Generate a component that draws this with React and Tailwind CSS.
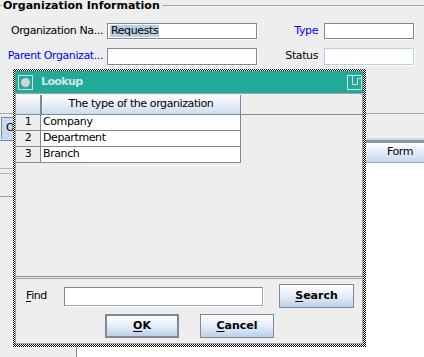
/**
 * Lookup dialog over an organization form (Swing Metal look)
 */
function Field({ className = '', children }) {
  return (
    <div
      className={`h-[16px] bg-white border flex items-center shadow-[1px_1px_0_#ffffff] ${className}`}
    >
      {children}
    </div>
  );
}

function Button({ className = '', children }) {
  return (
    <div
      className={`h-[24px] flex items-center justify-center font-bold bg-gradient-to-b from-white via-[#e4edf7] to-[#bcd0e8] tracking-normal ${className}`}
    >
      {children}
    </div>
  );
}

function TitleIcon() {
  return (
    <svg width="15" height="15" viewBox="0 0 15 15">
      <rect x="0.5" y="0.5" width="14" height="14" fill="none" stroke="#cfdedb" />
      <circle cx="7.5" cy="7.5" r="4.5" fill="#d4d4d4" />
    </svg>
  );
}

function MaximizeIcon() {
  return (
    <svg width="15" height="15" viewBox="0 0 15 15">
      <rect x="0.5" y="0.5" width="14" height="14" fill="none" stroke="#cfdedb" />
      <path d="M5.5 0.5V9.5H10.5V3.5H14.5" fill="none" stroke="#cfdedb" />
    </svg>
  );
}

const rows = ['Company', 'Department', 'Branch'];

export default function App() {
  return (
    <div className="relative w-[424px] h-[357px] overflow-hidden bg-[#eeeeee] text-[11px] tracking-[-0.4px] text-black font-['DejaVu_Sans',sans-serif]">
      {/* form behind the dialog */}
      <div className="flex flex-col h-full">
        <div className="flex items-center h-[12px] -mt-[1px]">
          <div className="w-[2px] h-px bg-[#a8a8a8]" />
          <span className="ml-[1px] font-bold leading-none tracking-normal">Organization Information</span>
          <div className="flex-1 ml-[2px] h-px bg-[#a8a8a8]" />
        </div>

        <div className="flex items-center mt-[12px] h-[16px]">
          <div className="w-[103px] text-right">Organization Na...</div>
          <Field className="ml-[4px] w-[150px] border-[#7a8a99] pl-[2px]">
            <span className="bg-[#b8cfe5] px-px leading-[12px]">Requests</span>
          </Field>
          <div className="w-[61px] text-right text-[#0000ff]">Type</div>
          <Field className="ml-[6px] w-[90px] border-[#7a8a99]" />
        </div>

        <div className="flex items-center mt-[9px] h-[17px]">
          <div className="w-[103px] text-right text-[#0000ff]">Parent Organizat...</div>
          <Field className="ml-[4px] w-[150px] h-[17px] border-[#7a8a99]" />
          <div className="w-[61px] text-right">Status</div>
          <Field className="ml-[6px] w-[90px] h-[17px] border-[#b8cfe5]" />
        </div>

        <div className="mt-[48px] h-px bg-[#a8a8a8]" />
        <div className="h-[24px] flex items-end">
          <div className="ml-[1px] h-[21px] w-[12px] bg-[#c8daf0] border-t border-l border-[#7a8a99] pl-[4px] flex items-center">
            O
          </div>
          <div className="h-[21px] flex-1 bg-[#eeeeee]" />
        </div>
        <div className="h-[2px] bg-[#c8daf0]" />

        <div className="flex flex-1">
          <div className="w-[77px] border-t border-r border-[#7a8a99] flex flex-col">
            <div className="mt-[27px] h-px bg-[#a9b5c2]" />
            <div className="mt-[4px] h-px bg-[#a9b5c2]" />
            <div className="mt-[22px] h-px bg-[#a0a0a0]" />
          </div>
          <div className="flex-1 bg-white flex flex-col border-t-[3px] border-[#8797ab]">
            <div className="h-[20px] flex bg-gradient-to-b from-white to-[#c6d8ee] border-b border-[#9aaabb]">
              <div className="flex-1" />
              <div className="w-[58px] pl-[10px] flex items-center justify-center">Form</div>
            </div>
          </div>
        </div>
      </div>

      {/* Lookup dialog */}
      <div className="absolute left-[13px] top-[69px] w-[353px] h-[278px] pt-[2px] pl-[2px] pr-[3px] pb-[3px] bg-[repeating-conic-gradient(#000_0%_25%,#fff_0%_50%)] bg-[length:2px_2px]">
        <div className="h-full flex flex-col bg-[#eeeeee]">
          <div className="h-[22px] bg-[#21a99a] flex items-center pl-[3px] pr-px">
            <TitleIcon />
            <span className="ml-[8px] font-bold text-[#d3e6e2] tracking-[-0.6px]">Lookup</span>
            <div className="flex-1" />
            <MaximizeIcon />
          </div>

          <div className="flex-1 flex flex-col border-x border-[#a3a3a3]">
            <div className="h-px bg-[#a3a3a3]" />
            <div className="h-px" />
            {/* table */}
            <div className="h-[182px] border-b border-[#8a8a8a]">
              <div className="flex h-[20px] border-b border-[#7a8a99]">
                <div className="w-[26px] border-r-2 border-[#7a8a99] bg-gradient-to-b from-white to-[#cddcee]" />
                <div className="w-[199px] border-r border-[#7a8a99] bg-gradient-to-b from-white to-[#cddcee] flex items-center justify-center">
                  The type of the organization
                </div>
              </div>
              {rows.map((name, i) => (
                <div key={name} className="flex h-[16px]">
                  <div className="w-[25px] border-r border-b border-[#7a8a99] flex items-center justify-center">
                    {i + 1}
                  </div>
                  <div className="w-[200px] border-r border-b border-[#7a8a99] bg-white flex items-center pl-[2px]">
                    {name}
                  </div>
                </div>
              ))}
            </div>

            {/* find + buttons */}
            <div className="mt-px flex-1 border-t border-b border-[#a3a3a3] flex flex-col">
              <div className="mt-[5px] h-[24px] flex items-center">
                <div className="ml-[10px] w-[38px]">
                  <span className="underline underline-offset-2">F</span>ind
                </div>
                <div className="h-[19px] w-[199px] bg-white border-t border-l border-[#7a8a99] border-r border-b border-r-[#9aa6b2] border-b-[#9aa6b2] shadow-[1px_1px_0_#ffffff]" />
                <Button className="ml-[16px] w-[75px] border border-[#7a8a99]">
                  <span className="underline underline-offset-2">S</span>earch
                </Button>
              </div>
              <div className="mt-[6px] h-[24px] flex items-center">
                <Button className="ml-[89px] w-[74px] border-2 border-[#7a8a99]">
                  <span className="underline underline-offset-2">O</span>K
                </Button>
                <Button className="ml-[21px] w-[74px] border border-[#7a8a99]">
                  <span className="underline underline-offset-2">C</span>ancel
                </Button>
              </div>
            </div>
          </div>
        </div>
      </div>
    </div>
  );
}
